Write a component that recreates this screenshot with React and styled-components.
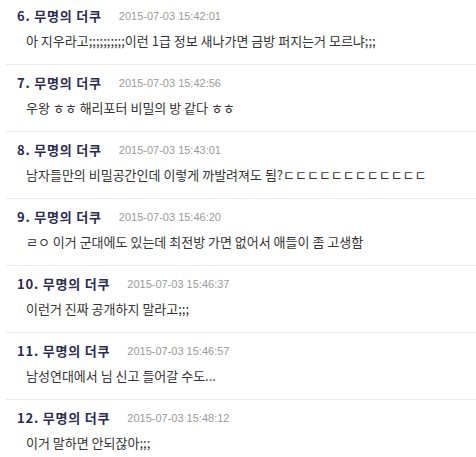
import React from 'react'
import styled, { createGlobalStyle } from 'styled-components'

const GlobalStyle = createGlobalStyle`
  html, body { margin: 0; padding: 0; background: #fff; }
  body { font-family: "Noto Sans CJK KR", "Liberation Sans", sans-serif; }
`

const comments = [
  { no: 6, date: '2015-07-03 15:42:01', text: '아 지우라고;;;;;;;;;;이런 1급 정보 새나가면 금방 퍼지는거 모르냐;;;' },
  { no: 7, date: '2015-07-03 15:42:56', text: '우왕 ㅎㅎ 해리포터 비밀의 방 같다 ㅎㅎ' },
  { no: 8, date: '2015-07-03 15:43:01', text: '남자들만의 비밀공간인데 이렇게 까발려져도 됨?ㄷㄷㄷㄷㄷㄷㄷㄷㄷㄷㄷㄷ' },
  { no: 9, date: '2015-07-03 15:46:20', text: 'ㄹㅇ 이거 군대에도 있는데 최전방 가면 없어서 애들이 좀 고생함' },
  { no: 10, date: '2015-07-03 15:46:37', text: '이런거 진짜 공개하지 말라고;;;' },
  { no: 11, date: '2015-07-03 15:46:57', text: '남성연대에서 님 신고 들어갈 수도...' },
  { no: 12, date: '2015-07-03 15:48:12', text: '이거 말하면 안되잖아;;;' },
]

export default function App() {
  return (
    <>
      <GlobalStyle />
      <List>
        {comments.map((c) => (
          <Row key={c.no}>
            <Header>
              <Name>{c.no}. 무명의 더쿠</Name>
              <Date>{c.date}</Date>
            </Header>
            <Body>{c.text}</Body>
          </Row>
        ))}
      </List>
    </>
  )
}

const List = styled.ul`
  list-style: none;
  margin: -2px 0 0 6px;
  padding: 0;
`

const Row = styled.li`
  padding: 11px 0 15px;
  border-bottom: 1px solid #ebebeb;
`

const Header = styled.div`
  display: flex;
  align-items: center;
  gap: 17px;
  height: 14px;
  padding-left: 11px;
`

const Name = styled.span`
  font-family: "Noto Sans CJK KR", sans-serif;
  font-weight: 700;
  font-size: 13px;
  letter-spacing: 0.8px;
  line-height: 14px;
  color: #2b2b52;
`

const Date = styled.span`
  font-family: "Liberation Sans", Arial, sans-serif;
  font-size: 11px;
  line-height: 14px;
  color: #9a9a9a;
`

const Body = styled.p`
  margin: 10px 0 0;
  padding-left: 20px;
  font-family: "Noto Sans CJK KR", sans-serif;
  font-size: 13px;
  line-height: 16px;
  color: #333;
  white-space: nowrap;
`
